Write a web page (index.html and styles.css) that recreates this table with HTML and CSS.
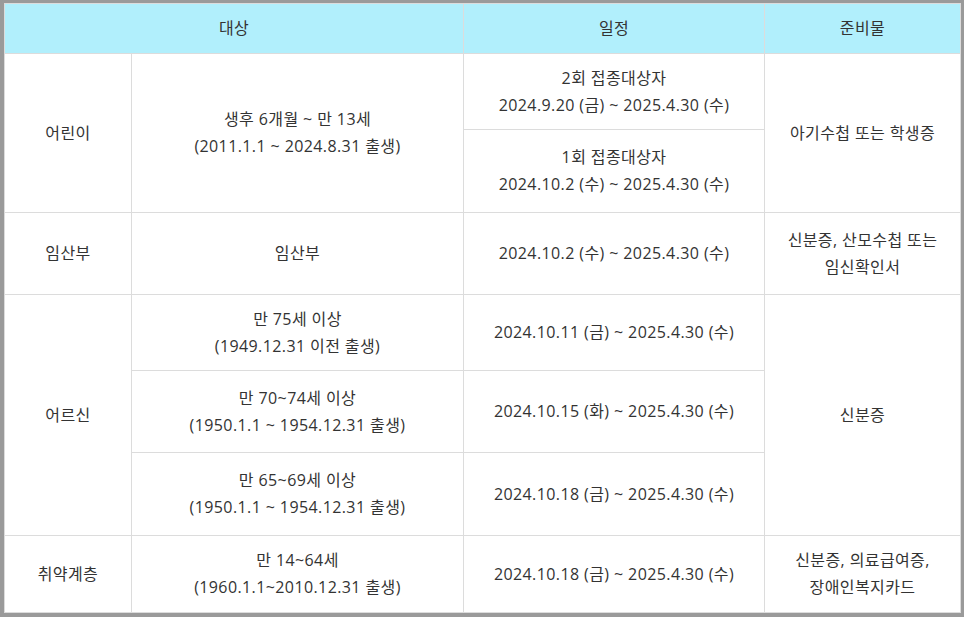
FILE: index.html
```html
<!DOCTYPE html>
<html lang="ko">
<head>
<meta charset="utf-8">
<link rel="stylesheet" href="styles.css">
</head>
<body>
<table class="sched">
  <colgroup>
    <col class="c1"><col class="c2"><col class="c3"><col class="c4">
  </colgroup>
  <thead>
    <tr class="h-head">
      <th colspan="2">대상</th>
      <th>일정</th>
      <th>준비물</th>
    </tr>
  </thead>
  <tbody>
    <tr class="h76">
      <td rowspan="2">어린이</td>
      <td rowspan="2">생후 6개월 ~ 만 13세<br>(2011.1.1 ~ 2024.8.31 출생)</td>
      <td>2회 접종대상자<br>2024.9.20 (금) ~ 2025.4.30 (수)</td>
      <td rowspan="2">아기수첩 또는 학생증</td>
    </tr>
    <tr class="h83">
      <td>1회 접종대상자<br>2024.10.2 (수) ~ 2025.4.30 (수)</td>
    </tr>
    <tr class="h82">
      <td>임산부</td>
      <td>임산부</td>
      <td>2024.10.2 (수) ~ 2025.4.30 (수)</td>
      <td>신분증, 산모수첩 또는<br>임신확인서</td>
    </tr>
    <tr class="h76">
      <td rowspan="3">어르신</td>
      <td>만 75세 이상<br>(1949.12.31 이전 출생)</td>
      <td>2024.10.11 (금) ~ 2025.4.30 (수)</td>
      <td rowspan="3">신분증</td>
    </tr>
    <tr class="h82">
      <td>만 70~74세 이상<br>(1950.1.1 ~ 1954.12.31 출생)</td>
      <td>2024.10.15 (화) ~ 2025.4.30 (수)</td>
    </tr>
    <tr class="h83">
      <td>만 65~69세 이상<br>(1950.1.1 ~ 1954.12.31 출생)</td>
      <td>2024.10.18 (금) ~ 2025.4.30 (수)</td>
    </tr>
    <tr class="h77">
      <td>취약계층</td>
      <td>만 14~64세<br>(1960.1.1~2010.12.31 출생)</td>
      <td>2024.10.18 (금) ~ 2025.4.30 (수)</td>
      <td>신분증, 의료급여증,<br>장애인복지카드</td>
    </tr>
  </tbody>
</table>
</body>
</html>
```
FILE: styles.css
```css
html, body {
  margin: 0;
  padding: 0;
  background: #9a9a9a;
}
body {
  padding: 3px 4px 0 4px;
}
.sched {
  width: 956px;
  border-collapse: collapse;
  table-layout: fixed;
  background: #ffffff;
  border: 1px solid #dcdcdc;
  font-family: "Open Sans", "Noto Sans CJK KR", sans-serif;
  font-size: 16px;
  line-height: 27px;
  letter-spacing: 0.4px;
  color: #333333;
}
.c1 { width: 127px; }
.c2 { width: 332px; }
.c3 { width: 301px; }
.c4 { width: 196px; }
.sched th, .sched td {
  border: 1px solid #dcdcdc;
  text-align: center;
  vertical-align: middle;
  padding: 0 4px;
}
.sched th {
  background: #b1effc;
  font-weight: 400;
  color: #333333;
}
.h-head { height: 50px; }
.h76 { height: 76px; }
.h77 { height: 77px; }
.h82 { height: 82px; }
.h83 { height: 83px; }
```
